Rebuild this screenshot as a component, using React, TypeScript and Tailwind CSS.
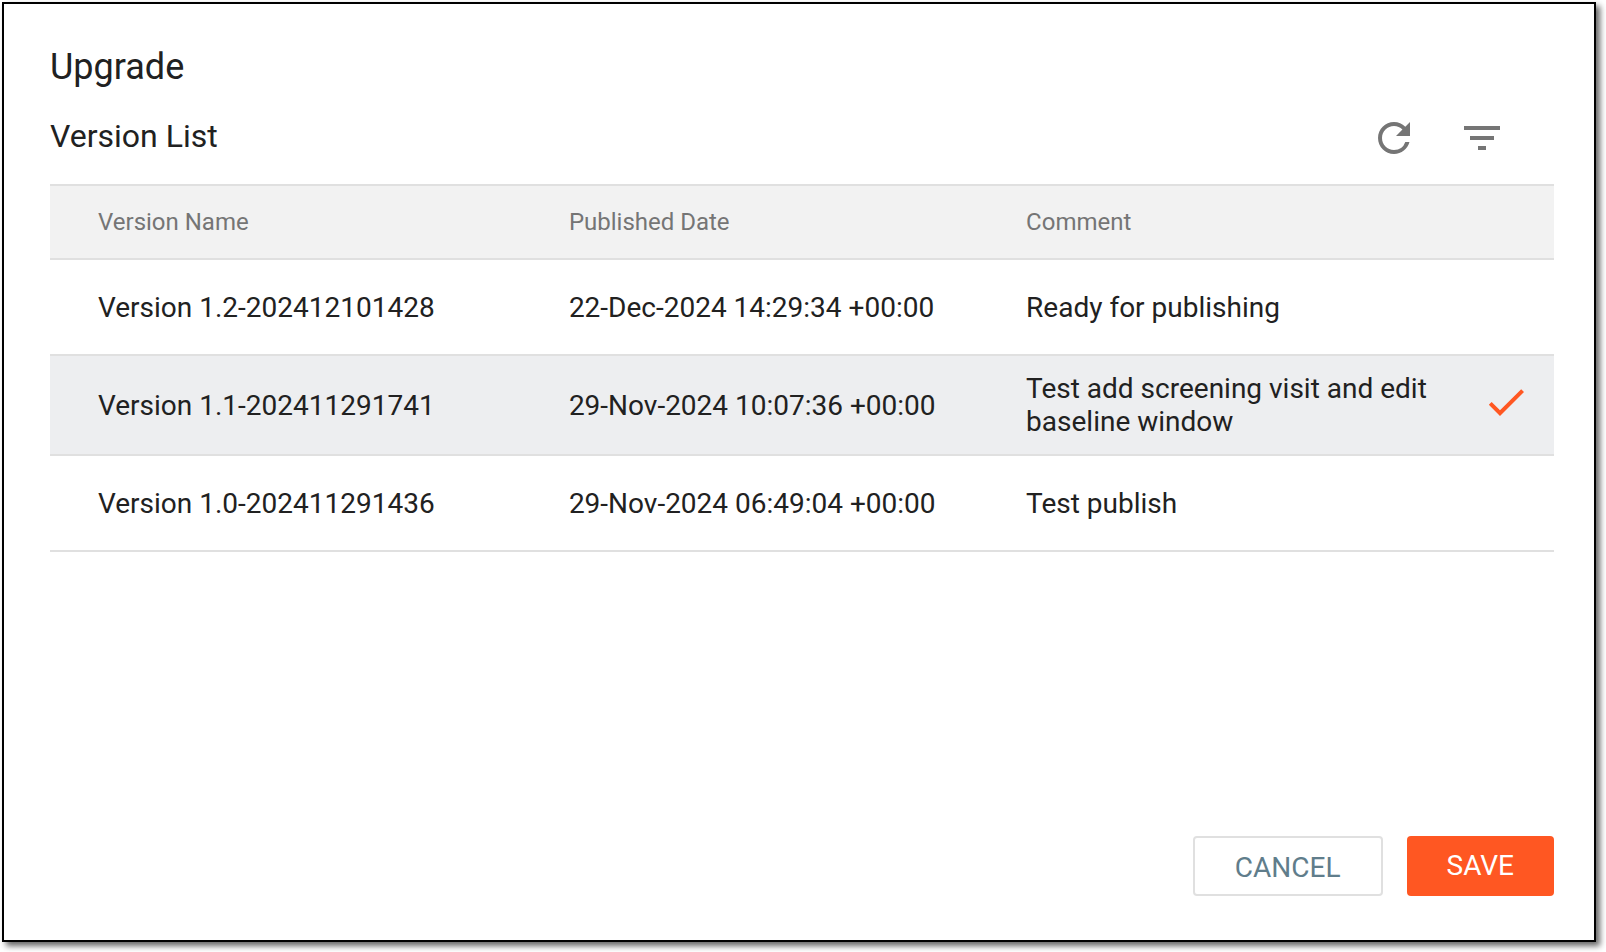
import { useState } from 'react'
import { MdCheck, MdFilterList, MdRefresh } from 'react-icons/md'

const versions = [
  {
    name: 'Version 1.2-202412101428',
    published: '22-Dec-2024 14:29:34 +00:00',
    comment: 'Ready for publishing',
  },
  {
    name: 'Version 1.1-202411291741',
    published: '29-Nov-2024 10:07:36 +00:00',
    comment: 'Test add screening visit and edit baseline window',
  },
  {
    name: 'Version 1.0-202411291436',
    published: '29-Nov-2024 06:49:04 +00:00',
    comment: 'Test publish',
  },
]

const headCell = 'border-y-2 border-[#e0e0e0] py-[22px] font-normal'
const bodyCell = 'h-24 border-b-2 border-[#e0e0e0] py-4'

function VersionTable() {
  const [selected, setSelected] = useState(versions[1].name)

  return (
    <table className="w-full table-fixed border-separate border-spacing-0 text-left">
      <thead className="bg-[#f2f2f2] text-2xl leading-7 text-[#757575]">
        <tr>
          <th scope="col" className={`${headCell} w-[34.5%] pl-12`}>Version Name</th>
          <th scope="col" className={`${headCell} w-[30.4%]`}>Published Date</th>
          <th scope="col" className={headCell}>Comment</th>
          <td className={`${headCell} w-24`} />
        </tr>
      </thead>
      <tbody className="text-[28px] leading-[33px]">
        {versions.map((version) => {
          const isSelected = version.name === selected
          return (
            <tr
              key={version.name}
              aria-selected={isSelected}
              onClick={() => setSelected(version.name)}
              className={`cursor-pointer ${isSelected ? 'bg-[#edeef0]' : 'bg-white'}`}
            >
              <td className={`${bodyCell} pl-12`}>{version.name}</td>
              <td className={bodyCell}>{version.published}</td>
              <td className={bodyCell}>{version.comment}</td>
              <td className="border-b-2 border-[#e0e0e0] pt-4 pr-6 pb-[22px]">
                {isSelected && <MdCheck className="ml-auto size-12 text-[#ff5722]" />}
              </td>
            </tr>
          )
        })}
      </tbody>
    </table>
  )
}

export default function App() {
  return (
    <div className="flex min-h-screen bg-white pt-[2px] pr-[10px] pb-[10px] pl-[2px] font-[Roboto,sans-serif] text-[#212121]">
      <section
        role="dialog"
        aria-labelledby="upgrade-title"
        className="flex flex-1 flex-col border-2 border-black bg-white pt-10 pr-10 pb-11 pl-[46px] shadow-[4px_4px_6px_rgba(0,0,0,0.6)]"
      >
        <h1 id="upgrade-title" className="mb-6 text-4xl leading-[46px]">Upgrade</h1>

        <div className="mb-[22px] flex items-start justify-between pr-12">
          <h2 className="text-[32px] leading-[44px]">Version List</h2>
          <div className="flex gap-10 text-[#757575]">
            <button type="button" aria-label="Refresh">
              <MdRefresh className="size-12" />
            </button>
            <button type="button" aria-label="Filter">
              <MdFilterList className="size-12" />
            </button>
          </div>
        </div>

        <VersionTable />

        <div className="mt-auto flex justify-end gap-6 pt-12 text-[28px]">
          <button type="button" className="rounded border-2 border-[#e0e0e0] px-10 pt-1 leading-[52px] text-[#607d8b]">
            CANCEL
          </button>
          <button type="button" className="rounded bg-[#ff5722] px-10 leading-[60px] text-white">
            SAVE
          </button>
        </div>
      </section>
    </div>
  )
}
